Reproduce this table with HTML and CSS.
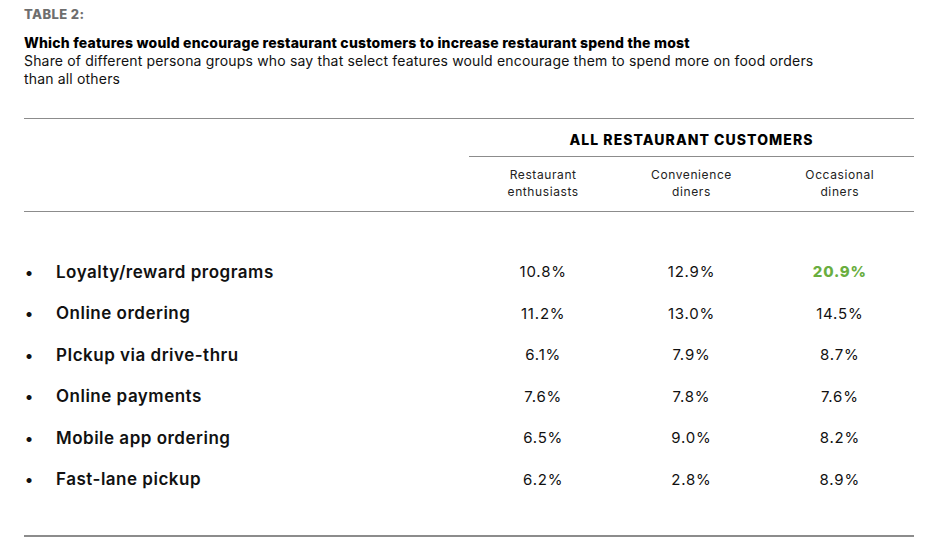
FILE: index.html
```html
<!DOCTYPE html>
<html lang="en">
<head>
<meta charset="utf-8">
<title>Table 2</title>
<link rel="stylesheet" href="styles.css">
</head>
<body>
<div class="page">
  <div class="kicker">TABLE 2:</div>
  <h1 class="title">Which features would encourage restaurant customers to increase restaurant spend the most</h1>
  <p class="subtitle">Share of different persona groups who say that select features would encourage them to spend more on food orders than all others</p>

  <div class="table">
    <div class="head">
      <div class="head-spacer"></div>
      <div class="group">
        <div class="group-title">ALL RESTAURANT CUSTOMERS</div>
        <div class="cols">
          <div class="col-head">Restaurant<br>enthusiasts</div>
          <div class="col-head">Convenience<br>diners</div>
          <div class="col-head">Occasional<br>diners</div>
        </div>
      </div>
    </div>
    <div class="body">
      <div class="row"><div class="feature"><span class="bullet">•</span>Loyalty/reward programs</div><div class="val">10.8%</div><div class="val">12.9%</div><div class="val hi">20.9%</div></div>
      <div class="row"><div class="feature"><span class="bullet">•</span>Online ordering</div><div class="val">11.2%</div><div class="val">13.0%</div><div class="val">14.5%</div></div>
      <div class="row"><div class="feature"><span class="bullet">•</span>PIckup via drive-thru</div><div class="val">6.1%</div><div class="val">7.9%</div><div class="val">8.7%</div></div>
      <div class="row"><div class="feature"><span class="bullet">•</span>Online payments</div><div class="val">7.6%</div><div class="val">7.8%</div><div class="val">7.6%</div></div>
      <div class="row"><div class="feature"><span class="bullet">•</span>Mobile app ordering</div><div class="val">6.5%</div><div class="val">9.0%</div><div class="val">8.2%</div></div>
      <div class="row"><div class="feature"><span class="bullet">•</span>Fast-lane pickup</div><div class="val">6.2%</div><div class="val">2.8%</div><div class="val">8.9%</div></div>
    </div>
  </div>
</div>
</body>
</html>
```
FILE: styles.css
```css
* { box-sizing: border-box; }
html, body { margin: 0; padding: 0; background: #fff; }
body {
  font-family: "Inter", "Liberation Sans", sans-serif;
  color: #111;
}
.page {
  width: 890px;
  margin-left: 24px;
  padding-top: 6px;
}
.kicker {
  font-size: 13px;
  font-weight: 800;
  color: #6e6e6e;
  line-height: 16px;
  letter-spacing: 0.4px;
}
.title {
  margin: 12px 0 0 0;
  font-size: 14px;
  font-weight: 800;
  line-height: 18px;
  letter-spacing: 0.2px;
  color: #000;
}
.subtitle {
  margin: 0;
  font-size: 14px;
  font-weight: 400;
  line-height: 18px;
  letter-spacing: 0.17px;
  width: 820px;
  color: #111;
}
.table {
  margin-top: 30px;
  border-top: 1px solid #8c8c8c;
}
.head {
  display: grid;
  grid-template-columns: 445px 1fr;
  border-bottom: 1px solid #8c8c8c;
}
.group-title {
  text-align: center;
  font-size: 14px;
  font-weight: 800;
  line-height: 18px;
  letter-spacing: 1.05px;
  padding: 12px 0 7px;
  border-bottom: 1px solid #8c8c8c;
  color: #000;
}
.cols {
  display: grid;
  grid-template-columns: repeat(3, 1fr);
  padding: 9px 0 11px;
}
.col-head {
  text-align: center;
  font-size: 12px;
  line-height: 17px;
  letter-spacing: 0.6px;
  color: #222;
}
.body {
  padding: 39px 0 35px;
  border-bottom: 2px solid #8c8c8c;
}
.row {
  display: grid;
  grid-template-columns: 445px repeat(3, 1fr);
  height: 41.5px;
  align-items: center;
}
.feature {
  display: flex;
  align-items: center;
  font-size: 17px;
  font-weight: 600;
  letter-spacing: 0.5px;
  color: #111;
}
.bullet {
  width: 32px;
  padding-left: 1px;
  font-size: 16px;
  letter-spacing: 0;
}
.val {
  text-align: center;
  font-size: 15px;
  font-weight: 400;
  letter-spacing: 0.8px;
  color: #111;
}
.val.hi {
  color: #6aae3f;
  font-weight: 800;
}
```
